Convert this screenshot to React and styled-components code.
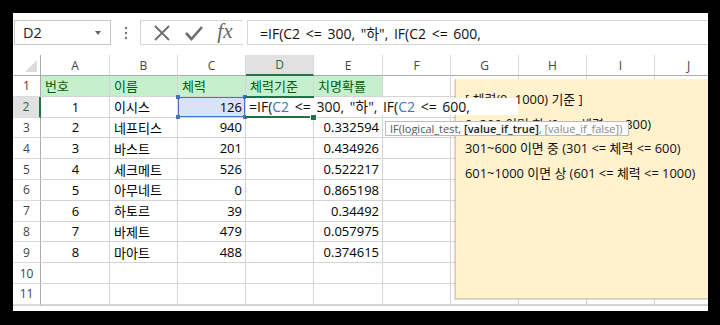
import React from "react";
import styled, { createGlobalStyle } from "styled-components";

const GlobalStyle = createGlobalStyle`
  html, body {
    margin: 0;
    padding: 0;
    background: #000;
  }
  body {
    font-family: "Open Sans", "Noto Sans CJK KR", sans-serif;
  }
`;

///////////////////////frame/////////////////////
const Frame = styled.div`
  width: 720px;
  height: 325px;
  box-sizing: border-box;
  padding: 13px 12px 14px 13px;
  background: #000;
  overflow: hidden;
`;

const Window = styled.div`
  width: 695px;
  height: 298px;
  background: #fff;
  overflow: hidden;
  display: flex;
  flex-direction: column;
`;

///////////////////////formula bar/////////////////////
const FormulaBar = styled.div`
  display: flex;
  align-items: stretch;
  height: 25px;
  margin-top: 7px;
  padding-left: 1px;
`;

const NameBox = styled.div`
  position: relative;
  box-sizing: border-box;
  width: 97px;
  border: 1px solid #c6c6c6;
  display: flex;
  align-items: center;
  padding-left: 8px;
  font-size: 14.5px;
  color: #222;
  &::after {
    content: "";
    position: absolute;
    right: 9px;
    top: 10px;
    border-left: 3px solid transparent;
    border-right: 3px solid transparent;
    border-top: 4px solid #666;
  }
`;

const Grip = styled.div`
  width: 29px;
  display: flex;
  align-items: center;
  justify-content: center;
`;

const FxGroup = styled.div`
  box-sizing: border-box;
  width: 103px;
  border: 1px solid #d5d5d5;
  border-right: none;
  display: flex;
  align-items: center;
  justify-content: space-around;
  padding: 0 4px 0 6px;
`;

const FxText = styled.span`
  font-family: "Liberation Serif", serif;
  font-style: italic;
  font-size: 21px;
  color: #666;
  line-height: 1;
  margin-top: -2px;
`;

const FormulaInput = styled.div`
  flex: 1;
  box-sizing: border-box;
  margin-left: 4px;
  border: 1px solid #d5d5d5;
  border-right: none;
  display: flex;
  align-items: center;
  padding-left: 12px;
  font-size: 14px;
  word-spacing: 2px;
  color: #111;
  white-space: pre;
`;

///////////////////////sheet/////////////////////
const Sheet = styled.div`
  position: relative;
  margin-top: 10px;
  display: grid;
  grid-template-columns: 28px 69px 68px 68px 68px 69px 68px 68px 68px 68px 68px;
  grid-template-rows: 21px repeat(11, 20.8px);
  font-size: 13px;
`;

const Corner = styled.div`
  position: relative;
  box-sizing: border-box;
  background: #fff;
  border-right: 1px solid #ababab;
  border-bottom: 1px solid #ababab;
  &::after {
    content: "";
    position: absolute;
    right: 3px;
    bottom: 3px;
    border-left: 12px solid transparent;
    border-bottom: 12px solid #dcdcdc;
  }
`;

const ColHead = styled.div`
  box-sizing: border-box;
  display: flex;
  align-items: center;
  justify-content: center;
  font-size: 12px;
  color: ${(p) => (p.$active ? "#1e6b3f" : "#444")};
  background: ${(p) => (p.$active ? "#e1e1e1" : "#fff")};
  border-right: 1px solid #dadada;
  border-bottom: ${(p) => (p.$active ? "2px solid #217346" : "1px solid #ababab")};
`;

const RowHead = styled.div`
  box-sizing: border-box;
  display: flex;
  align-items: center;
  justify-content: center;
  font-size: 12px;
  color: ${(p) => (p.$active ? "#1e6b3f" : "#444")};
  background: ${(p) => (p.$active ? "#e1e1e1" : "#fff")};
  border-bottom: 1px solid #dadada;
  border-right: ${(p) => (p.$active ? "2px solid #217346" : "1px solid #ababab")};
`;

const justify = { left: "flex-start", center: "center", right: "flex-end" };

const Cell = styled.div`
  position: relative;
  box-sizing: border-box;
  display: flex;
  align-items: center;
  justify-content: ${(p) => justify[p.$align || "left"]};
  padding: 0 3px 0 4px;
  white-space: nowrap;
  border-right: 1px solid #d4d4d4;
  border-bottom: 1px solid #d4d4d4;
  background: ${(p) => (p.$good ? "#c6efce" : p.$refd ? "#dae3f3" : "#fff")};
  color: ${(p) => (p.$good ? "#006100" : "#000")};
  box-shadow: ${(p) => (p.$refd ? "inset 0 0 0 1px #4472c4" : "none")};
  z-index: ${(p) => (p.$refd || p.$active ? 1 : 0)};
  ${(p) =>
    p.$active &&
    `
    &::after {
      content: "";
      position: absolute;
      left: -1px;
      right: -1px;
      top: -1px;
      bottom: -1px;
      border-top: 2px solid #217346;
      border-bottom: 2px solid #217346;
    }
    &::before {
      content: "";
      position: absolute;
      right: -4px;
      bottom: -4px;
      width: 5px;
      height: 5px;
      background: #217346;
      border: 1px solid #fff;
      z-index: 5;
    }
  `}
`;

const Handle = styled.span`
  position: absolute;
  width: 4px;
  height: 4px;
  background: #4472c4;
  ${(p) => (p.$top ? "top: -2px;" : "bottom: -2px;")}
  ${(p) => (p.$left ? "left: -2px;" : "right: -2px;")}
`;

///////////////////////overlays/////////////////////
const Note = styled.div`
  position: absolute;
  left: 442px;
  top: 24px;
  width: 270px;
  height: 220px;
  box-sizing: border-box;
  padding: 8px 0 0 9px;
  background: #fff2cc;
  border-left: 1px solid #d6ccb0;
  border-bottom: 1px solid #d6ccb0;
  box-shadow: -1px 1px 1px rgba(0, 0, 0, 0.12);
  z-index: 2;
  font-size: 12.9px;
  line-height: 24.6px;
  color: #111;
  white-space: nowrap;
`;

const Editor = styled.div`
  position: absolute;
  left: 235px;
  top: 43px;
  width: 269px;
  height: 17px;
  padding-left: 1px;
  background: #fff;
  z-index: 3;
  font-size: 14px;
  word-spacing: 2px;
  line-height: 17px;
  color: #111;
  white-space: pre;
`;

const Ref = styled.span`
  color: #4472c4;
`;

const Tip = styled.div`
  position: absolute;
  left: 372px;
  top: 66px;
  width: 244px;
  height: 15px;
  box-sizing: border-box;
  padding-left: 4px;
  background: #fdfdfd;
  border: 1px solid #bcbcbc;
  z-index: 4;
  font-size: 11px;
  line-height: 13px;
  color: #555;
  white-space: pre;
  overflow: hidden;
`;

const TipArg = styled.span`
  color: ${(p) => (p.$current ? "#222" : "#8a8a8a")};
  font-weight: ${(p) => (p.$current ? 600 : 400)};
`;

///////////////////////data/////////////////////
const cols = ["A", "B", "C", "D", "E", "F", "G", "H", "I", "J"];
const header = ["번호", "이름", "체력", "체력기준", "치명확률"];
const rows = [
  [1, "이시스", 126, ""],
  [2, "네프티스", 940, "0.332594"],
  [3, "바스트", 201, "0.434926"],
  [4, "세크메트", 526, "0.522217"],
  [5, "아무네트", 0, "0.865198"],
  [6, "하토르", 39, "0.34492"],
  [7, "바제트", 479, "0.057975"],
  [8, "마아트", 488, "0.374615"],
];

const Cancel = () => (
  <svg width="18" height="18" viewBox="0 0 18 18">
    <path d="M2 2 L16 16 M16 2 L2 16" stroke="#6d6d6d" strokeWidth="1.8" fill="none" />
  </svg>
);

const Enter = () => (
  <svg width="20" height="18" viewBox="0 0 20 18">
    <path d="M2 9 L7.5 15 L18 3" stroke="#6d6d6d" strokeWidth="2.6" fill="none" />
  </svg>
);

const Dots = () => (
  <svg width="4" height="14" viewBox="0 0 4 14">
    <circle cx="2" cy="2" r="1.2" fill="#777" />
    <circle cx="2" cy="7" r="1.2" fill="#777" />
    <circle cx="2" cy="12" r="1.2" fill="#777" />
  </svg>
);

const App = () => {
  const bodyRows = [];
  for (let r = 2; r <= 12; r++) {
    const data = rows[r - 2];
    bodyRows.push(
      <RowHead key={`h${r}`} $active={r === 2}>
        {r < 12 ? r : ""}
      </RowHead>
    );
    cols.forEach((c, i) => {
      let content = "";
      let align = "left";
      if (data) {
        if (i === 0) {
          content = data[0];
          align = "center";
        } else if (i === 1) {
          content = data[1];
        } else if (i === 2) {
          content = data[2];
          align = "right";
        } else if (i === 4) {
          content = data[3];
          align = "right";
        }
      }
      const refd = r === 2 && c === "C";
      bodyRows.push(
        <Cell key={`${c}${r}`} $align={align} $refd={refd} $active={r === 2 && c === "D"}>
          {content}
          {refd && (
            <>
              <Handle $top $left />
              <Handle $top />
              <Handle $left />
              <Handle />
            </>
          )}
        </Cell>
      );
    });
  }

  return (
    <>
      <GlobalStyle />
      <Frame>
        <Window>
          <FormulaBar>
            <NameBox>D2</NameBox>
            <Grip>
              <Dots />
            </Grip>
            <FxGroup>
              <Cancel />
              <Enter />
              <FxText>fx</FxText>
            </FxGroup>
            <FormulaInput>{'=IF(C2 <= 300, "하", IF(C2 <= 600,'}</FormulaInput>
          </FormulaBar>

          <Sheet>
            <Corner />
            {cols.map((c) => (
              <ColHead key={c} $active={c === "D"}>
                {c}
              </ColHead>
            ))}
            <RowHead>1</RowHead>
            {cols.map((c, i) => (
              <Cell key={`${c}1`} $good={i < 5}>
                {header[i] || ""}
              </Cell>
            ))}
            {bodyRows}

            <Note>
              <div>[ 체력(0~1000) 기준 ]</div>
              <div>0~300 이면 하 (0 &lt;= 체력 &lt;= 300)</div>
              <div>301~600 이면 중 (301 &lt;= 체력 &lt;= 600)</div>
              <div>601~1000 이면 상 (601 &lt;= 체력 &lt;= 1000)</div>
            </Note>

            <Editor>
              =IF(<Ref>C2</Ref>
              {' <= 300, "하", IF('}
              <Ref>C2</Ref>
              {" <= 600,"}
            </Editor>

            <Tip>
              IF(logical_test, <TipArg $current>[value_if_true]</TipArg>
              <TipArg>, [value_if_false])</TipArg>
            </Tip>
          </Sheet>
        </Window>
      </Frame>
    </>
  );
};

export default App;
